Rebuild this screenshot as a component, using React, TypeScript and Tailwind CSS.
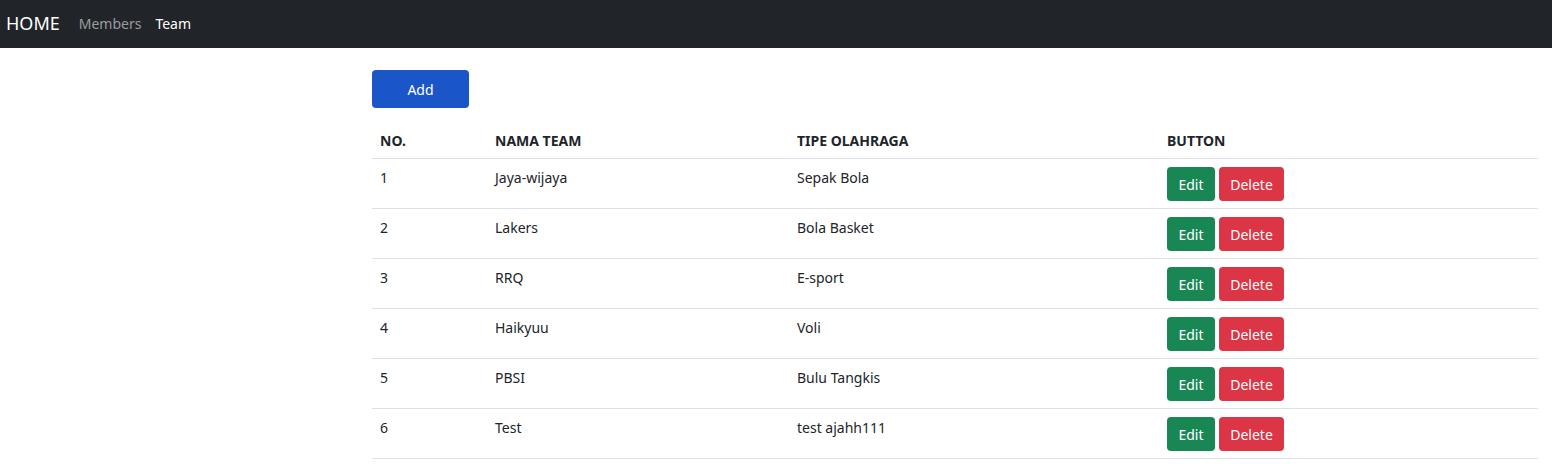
import React from 'react';

const teams = [
  { no: 1, nama: 'Jaya-wijaya', tipe: 'Sepak Bola' },
  { no: 2, nama: 'Lakers', tipe: 'Bola Basket' },
  { no: 3, nama: 'RRQ', tipe: 'E-sport' },
  { no: 4, nama: 'Haikyuu', tipe: 'Voli' },
  { no: 5, nama: 'PBSI', tipe: 'Bulu Tangkis' },
  { no: 6, nama: 'Test', tipe: 'test ajahh111' },
];

const App = () => {
  return (
    <div className="min-h-[475px] bg-white text-[#212529] font-['Noto_Sans',sans-serif]">
      <nav className="flex h-12 items-center bg-[#212529] px-[6px] pb-[2px]">
        <span className="mr-[19px] text-[18px] leading-none text-white">HOME</span>
        <a className="mr-[14px] text-[14px] text-[#ffffff8c]">Members</a>
        <a className="text-[14px] text-white">Team</a>
      </nav>

      <div className="ml-[372px] mr-[14px] pt-[22px]">
        <button className="h-[38px] w-[97px] rounded bg-[#1a56c8] text-[14px] text-white">
          Add
        </button>

        <table className="mt-[14px] w-full border-collapse text-left text-[14px]">
          <thead>
            <tr className="border-b border-[#dee2e6]">
              <th className="w-[115px] px-2 pt-[8px] pb-[7px] font-bold">NO.</th>
              <th className="w-[302px] px-2 pt-[8px] pb-[7px] font-bold">NAMA TEAM</th>
              <th className="w-[370px] px-2 pt-[8px] pb-[7px] font-bold">TIPE OLAHRAGA</th>
              <th className="px-2 pt-[8px] pb-[7px] font-bold">BUTTON</th>
            </tr>
          </thead>
          <tbody>
            {teams.map((t) => (
              <tr key={t.no} className="border-b border-[#dee2e6] align-top">
                <td className="px-2 pt-[8px] leading-[21px]">{t.no}</td>
                <td className="px-2 pt-[8px] leading-[21px]">{t.nama}</td>
                <td className="px-2 pt-[8px] leading-[21px]">{t.tipe}</td>
                <td className="px-2 pt-[8px] pb-[7px]">
                  <div className="flex gap-1">
                    <button className="h-[34px] w-12 rounded bg-[#198754] text-[14px] text-white">
                      Edit
                    </button>
                    <button className="h-[34px] w-[65px] rounded bg-[#dc3545] text-[14px] text-white">
                      Delete
                    </button>
                  </div>
                </td>
              </tr>
            ))}
          </tbody>
        </table>
      </div>
    </div>
  );
};

export default App;
